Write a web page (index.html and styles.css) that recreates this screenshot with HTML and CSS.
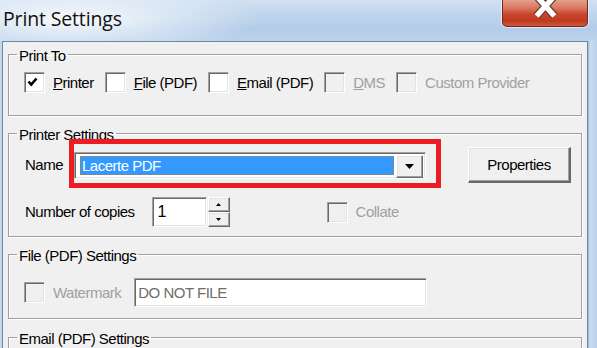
FILE: index.html
```html
<!DOCTYPE html>
<html>
<head>
<meta charset="utf-8">
<link rel="stylesheet" href="styles.css">
</head>
<body>
<div class="window">
  <div class="titlebar">
    <div class="title">Print Settings</div>
    <div class="close">
      <svg width="86" height="27" viewBox="0 0 86 27">
        <g stroke-linecap="butt" fill="none">
          <path d="M35 -3 L53 17 M53 -3 L35 17" stroke="#6b3a33" stroke-width="8"/>
          <path d="M35 -3 L53 17 M53 -3 L35 17" stroke="#ffffff" stroke-width="5.5"/>
        </g>
      </svg>
    </div>
  </div>
  <div class="frame">
    <div class="client">
      <fieldset class="group g1">
        <legend>Print To</legend>
        <div class="row printto">
          <label class="check">
            <span class="box"><svg width="19" height="19" viewBox="0 0 19 19"><polyline points="3.5,8.5 6.2,11.5 11.5,5.5" fill="none" stroke="#000" stroke-width="2.6"/></svg></span>
            <span class="lbl"><u>P</u>rinter</span>
          </label>
          <label class="check">
            <span class="box"></span>
            <span class="lbl"><u>F</u>ile (PDF)</span>
          </label>
          <label class="check">
            <span class="box"></span>
            <span class="lbl"><u>E</u>mail (PDF)</span>
          </label>
          <label class="check disabled">
            <span class="box"></span>
            <span class="lbl"><u>D</u>MS</span>
          </label>
          <label class="check disabled">
            <span class="box"></span>
            <span class="lbl">Custom Provider</span>
          </label>
        </div>
      </fieldset>

      <fieldset class="group g2">
        <legend>Printer Settings</legend>
        <div class="row name-row">
          <span class="lbl">Name</span>
          <div class="annot">
            <div class="combo sunken">
              <div class="combo-sel"><span>Lacerte PDF</span></div>
              <div class="combo-btn raised">
                <svg width="9" height="5" viewBox="0 0 9 5"><polygon points="0,0 9,0 4.5,5" fill="#000"/></svg>
              </div>
            </div>
          </div>
          <div class="button raised">Properties</div>
        </div>
        <div class="row copies-row">
          <span class="lbl">Number of copies</span>
          <div class="num sunken">1</div>
          <div class="spin">
            <div class="spin-btn raised"><svg width="5" height="3" viewBox="0 0 5 3"><polygon points="2.5,0 5,3 0,3" fill="#000"/></svg></div>
            <div class="spin-btn raised"><svg width="5" height="3" viewBox="0 0 5 3"><polygon points="0,0 5,0 2.5,3" fill="#000"/></svg></div>
          </div>
          <label class="check disabled collate">
            <span class="box"></span>
            <span class="lbl">Collate</span>
          </label>
        </div>
      </fieldset>

      <fieldset class="group g3">
        <legend>File (PDF) Settings</legend>
        <div class="row file-row">
          <label class="check disabled">
            <span class="box"></span>
            <span class="lbl">Watermark</span>
          </label>
          <div class="text sunken">DO NOT FILE</div>
        </div>
      </fieldset>

      <fieldset class="group g4">
        <legend>Email (PDF) Settings</legend>
        <div class="row email-row"></div>
      </fieldset>
    </div>
    <div class="edge"></div>
  </div>
</div>
</body>
</html>
```

FILE: styles.css
```css
html, body {
  margin: 0;
  padding: 0;
}
body {
  background: #c4d8ee;
  font-family: "Liberation Sans", Arial, sans-serif;
  font-size: 15px;
  letter-spacing: -0.5px;
  color: #000;
}
.window {
  width: 597px;
  height: 348px;
  overflow: hidden;
  background: #c4d8ee;
  display: flex;
  flex-direction: column;
}
.titlebar {
  height: 41px;
  flex: none;
  display: flex;
  justify-content: space-between;
  align-items: flex-start;
  background:
    radial-gradient(ellipse 190px 34px at 70px 20px, rgba(255,255,255,0.9), rgba(255,255,255,0) 100%),
    linear-gradient(180deg, #d2e1f2 0%, #c0d5ec 35%, #b3cce8 70%, #bcd3ec 100%);
}
.title {
  font-family: "Open Sans", "Noto Sans", sans-serif;
  font-size: 19.5px;
  letter-spacing: -0.15px;
  line-height: 28px;
  padding: 5px 0 0 3px;
  color: #111;
}
.close {
  width: 86px;
  height: 27px;
  margin-right: 9px;
  box-sizing: border-box;
  border: 1px solid #70291f;
  border-top: none;
  border-radius: 0 0 5px 5px;
  background: linear-gradient(180deg, #e4a08c 0%, #d97962 30%, #c8462d 55%, #c0391f 80%, #cc5a3c 100%);
  box-shadow: 0 0 0 1px rgba(255,255,255,0.55);
  overflow: hidden;
  display: flex;
}
.close svg {
  margin: -1px 0 0 -1px;
}
.frame {
  flex: 1;
  display: flex;
}
.client {
  width: 586px;
  margin-left: 2px;
  box-sizing: border-box;
  border: 1px solid #6f86a3;
  border-bottom: none;
  background: #f0f0f0;
  padding: 2px 0 0 5px;
  display: flex;
  flex-direction: column;
}
.edge {
  flex: 1;
  background: linear-gradient(90deg, #9fb6d2 0px, #c9dcf0 2px, #bcd1ea 100%);
}
.group {
  width: 574px;
  box-sizing: border-box;
  margin: 0;
  padding: 0;
  border: 1px solid #a0a0a0;
  box-shadow: 1px 1px 0 #fff, inset 1px 1px 0 #fff;
  min-width: 0;
}
.group legend {
  margin-left: 8px;
  padding: 4px 2px 0;
  line-height: 16px;
}
.g1 { margin-bottom: 7px; }
.g2 { margin-bottom: 7px; }
.g3 { margin-bottom: 8px; }

.row {
  display: flex;
  align-items: center;
}
.printto {
  padding: 8px 0 22px 15px;
  gap: 11px;
}
.name-row {
  padding: 4px 0 0 16px;
  height: 36px;
}
.copies-row {
  padding: 14px 0 9px 16px;
  height: 30px;
}
.file-row {
  padding: 14px 0 11px 15px;
  height: 29px;
}
.email-row {
  height: 30px;
}

.check {
  display: flex;
  align-items: center;
  gap: 8px;
}
.box {
  width: 21px;
  height: 21px;
  box-sizing: border-box;
  border: 1px solid;
  border-color: #a0a0a0 #ffffff #ffffff #a0a0a0;
  box-shadow: inset 1px 1px 0 #696969, inset -1px -1px 0 #e3e3e3;
  background: #fff;
  display: flex;
  flex: none;
}
.disabled .box {
  background: #f0f0f0;
}
.disabled .lbl {
  color: #a0a0a0;
}
.lbl {
  white-space: nowrap;
  line-height: 18px;
}

.sunken {
  box-sizing: border-box;
  border: 1px solid;
  border-color: #a0a0a0 #ffffff #ffffff #a0a0a0;
  box-shadow: inset 1px 1px 0 #696969, inset -1px -1px 0 #e3e3e3;
  background: #fff;
}
.raised {
  box-sizing: border-box;
  border: 1px solid;
  border-color: #ffffff #696969 #696969 #ffffff;
  box-shadow: inset -1px -1px 0 #a0a0a0, inset 1px 1px 0 #e3e3e3;
  background: #f0f0f0;
}

.annot {
  position: relative;
  margin-left: 11px;
}
.annot::after {
  content: "";
  position: absolute;
  top: -13px;
  right: -15px;
  bottom: -9px;
  left: -5px;
  border: 5px solid #ec1c24;
  pointer-events: none;
}
.combo {
  width: 352px;
  height: 27px;
  padding: 2px;
  display: flex;
}
.combo-sel {
  flex: 1;
  margin: 1px 2px 1px 3px;
  background: #3399ff;
  outline: 1px dotted #c2782d;
  outline-offset: -1px;
  color: #fff;
  display: flex;
  align-items: center;
  padding-left: 2px;
}
.combo-btn {
  width: 27px;
  height: 23px;
  display: flex;
  align-items: center;
  justify-content: center;
}
.button {
  width: 103px;
  height: 36px;
  margin-left: 42px;
  display: flex;
  align-items: center;
  justify-content: center;
  border-width: 1px 2px 2px 1px;
}

.num {
  width: 55px;
  height: 30px;
  margin-left: 17px;
  padding-left: 5px;
  display: flex;
  align-items: center;
  font-size: 16px;
}
.spin {
  margin-left: 1px;
  width: 22px;
  height: 30px;
  display: flex;
  flex-direction: column;
}
.spin-btn {
  flex: 1;
  display: flex;
  align-items: center;
  justify-content: center;
}
.collate {
  margin-left: 97px;
}

.text {
  width: 293px;
  height: 29px;
  margin-left: 13px;
  padding-left: 3px;
  display: flex;
  align-items: center;
  color: #6d6d6d;
}
```
